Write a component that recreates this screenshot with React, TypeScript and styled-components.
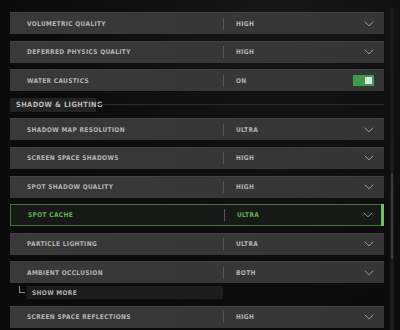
import React from "react";
import styled, { createGlobalStyle } from "styled-components";

const Global = createGlobalStyle`
  html, body { margin: 0; padding: 0; }
  body {
    width: 400px; height: 330px; overflow: hidden;
    background: radial-gradient(ellipse at 70% 0%, #161616 0%, #0c0c0c 60%, #0a0a0a 100%);
    font-family: "DejaVu Sans Condensed", "DejaVu Sans", sans-serif;
  }
`;

const Page = styled.div`
  display: flex;
  height: 330px;
  overflow: hidden;
`;

const List = styled.div`
  width: 374px;
  margin-left: 10px;
  padding-top: 12px;
  display: flex;
  flex-direction: column;
  gap: 6.6px;
`;

const Track = styled.div`
  margin-left: 6px;
  margin-top: 7px;
  width: 4px;
  background: #1a1a1a;
  padding-top: 166px;
  box-sizing: border-box;
`;

const Thumb = styled.div`
  width: 2px;
  margin-left: 1px;
  height: 86px;
  background: #3a3a3a;
`;

const Row = styled.div<{ $focus?: boolean }>`
  position: relative;
  flex: none;
  height: 22px;
  box-sizing: border-box;
  display: grid;
  grid-template-columns: 213px 1fr auto;
  align-items: center;
  background: ${(p) => (p.$focus ? "#171917" : "linear-gradient(90deg, #393939, #353535)")};
  border: ${(p) => (p.$focus ? "1px solid #3f7a36" : "none")};
  border-top: ${(p) => (p.$focus ? "1px solid #3f7a36" : "1px solid #424242")};
  color: ${(p) => (p.$focus ? "#62b053" : "#b4b4b4")};
  font-size: 6.5px;
  font-weight: bold;
  letter-spacing: 0.35px;
`;

const Label = styled.div`
  padding-left: 17px;
  white-space: nowrap;
`;

const Value = styled.div`
  height: 12px;
  display: flex;
  align-items: center;
  padding-left: 12px;
  border-left: 1px solid #555;
`;

const Right = styled.div`
  padding-right: 10px;
  display: flex;
  align-items: center;
`;

const Accent = styled.div`
  position: absolute;
  right: -1px;
  top: -1px;
  bottom: -1px;
  width: 3px;
  background: #6cc45e;
`;

const Toggle = styled.div`
  width: 21px;
  height: 11px;
  background: #3c9a48;
  display: flex;
  justify-content: flex-end;
  align-items: center;
  padding-right: 2px;
  box-sizing: border-box;
`;

const Knob = styled.div`
  width: 7px;
  height: 7px;
  background: #e4e4e4;
`;

const Header = styled.div`
  flex: none;
  height: 14px;
  display: flex;
  align-items: center;
`;

const HeaderBox = styled.div`
  height: 14px;
  padding-left: 6px;
  width: 86px;
  box-sizing: border-box;
  background: #232323;
  color: #bcbcbc;
  font-size: 7.3px;
  font-weight: bold;
  letter-spacing: 0.45px;
  display: flex;
  align-items: center;
  white-space: nowrap;
`;

const HeaderLine = styled.div`
  flex: 1;
  height: 1px;
  background: #2c2c2c;
  margin-left: 1px;
`;

const More = styled.div`
  flex: none;
  display: flex;
  align-items: flex-start;
  height: 13px;
  margin-top: -3.6px;
`;

const Corner = styled.div`
  width: 6px;
  height: 7px;
  margin-left: 9px;
  margin-right: 2px;
  border-left: 1px solid #8a8a8a;
  border-bottom: 1px solid #8a8a8a;
  box-sizing: border-box;
`;

const MoreBox = styled.div`
  width: 196px;
  height: 13px;
  background: #1d1d1d;
  color: #b0b0b0;
  font-size: 6.5px;
  font-weight: bold;
  letter-spacing: 0.35px;
  padding-left: 5px;
  box-sizing: border-box;
  display: flex;
  align-items: center;
`;

const Chevron = ({ color }: { color: string }) => (
  <svg width="10" height="6" viewBox="0 0 10 6">
    <path d="M0.7 0.7 L5 4.8 L9.3 0.7" fill="none" stroke={color} strokeWidth="1" />
  </svg>
);

type Item = { label: string; value: string; toggle?: boolean; focus?: boolean };

const SettingRow = ({ label, value, toggle, focus }: Item) => (
  <Row $focus={focus}>
    <Label>{label}</Label>
    <Value>{value}</Value>
    <Right>
      {toggle ? (
        <Toggle>
          <Knob />
        </Toggle>
      ) : (
        <Chevron color={focus ? "#62b053" : "#9a9a9a"} />
      )}
    </Right>
    {focus && <Accent />}
  </Row>
);

const top: Item[] = [
  { label: "VOLUMETRIC QUALITY", value: "HIGH" },
  { label: "DEFERRED PHYSICS QUALITY", value: "HIGH" },
  { label: "WATER CAUSTICS", value: "ON", toggle: true },
];

const shadow: Item[] = [
  { label: "SHADOW MAP RESOLUTION", value: "ULTRA" },
  { label: "SCREEN SPACE SHADOWS", value: "HIGH" },
  { label: "SPOT SHADOW QUALITY", value: "HIGH" },
  { label: "SPOT CACHE", value: "ULTRA", focus: true },
  { label: "PARTICLE LIGHTING", value: "ULTRA" },
  { label: "AMBIENT OCCLUSION", value: "BOTH" },
];

export default function App() {
  return (
    <>
      <Global />
      <Page>
        <List>
          {top.map((i) => (
            <SettingRow key={i.label} {...i} />
          ))}
          <Header>
            <HeaderBox>SHADOW &amp; LIGHTING</HeaderBox>
            <HeaderLine />
          </Header>
          {shadow.map((i) => (
            <SettingRow key={i.label} {...i} />
          ))}
          <More>
            <Corner />
            <MoreBox>SHOW MORE</MoreBox>
          </More>
          <SettingRow label="SCREEN SPACE REFLECTIONS" value="HIGH" />
        </List>
        <Track>
          <Thumb />
        </Track>
      </Page>
    </>
  );
}
